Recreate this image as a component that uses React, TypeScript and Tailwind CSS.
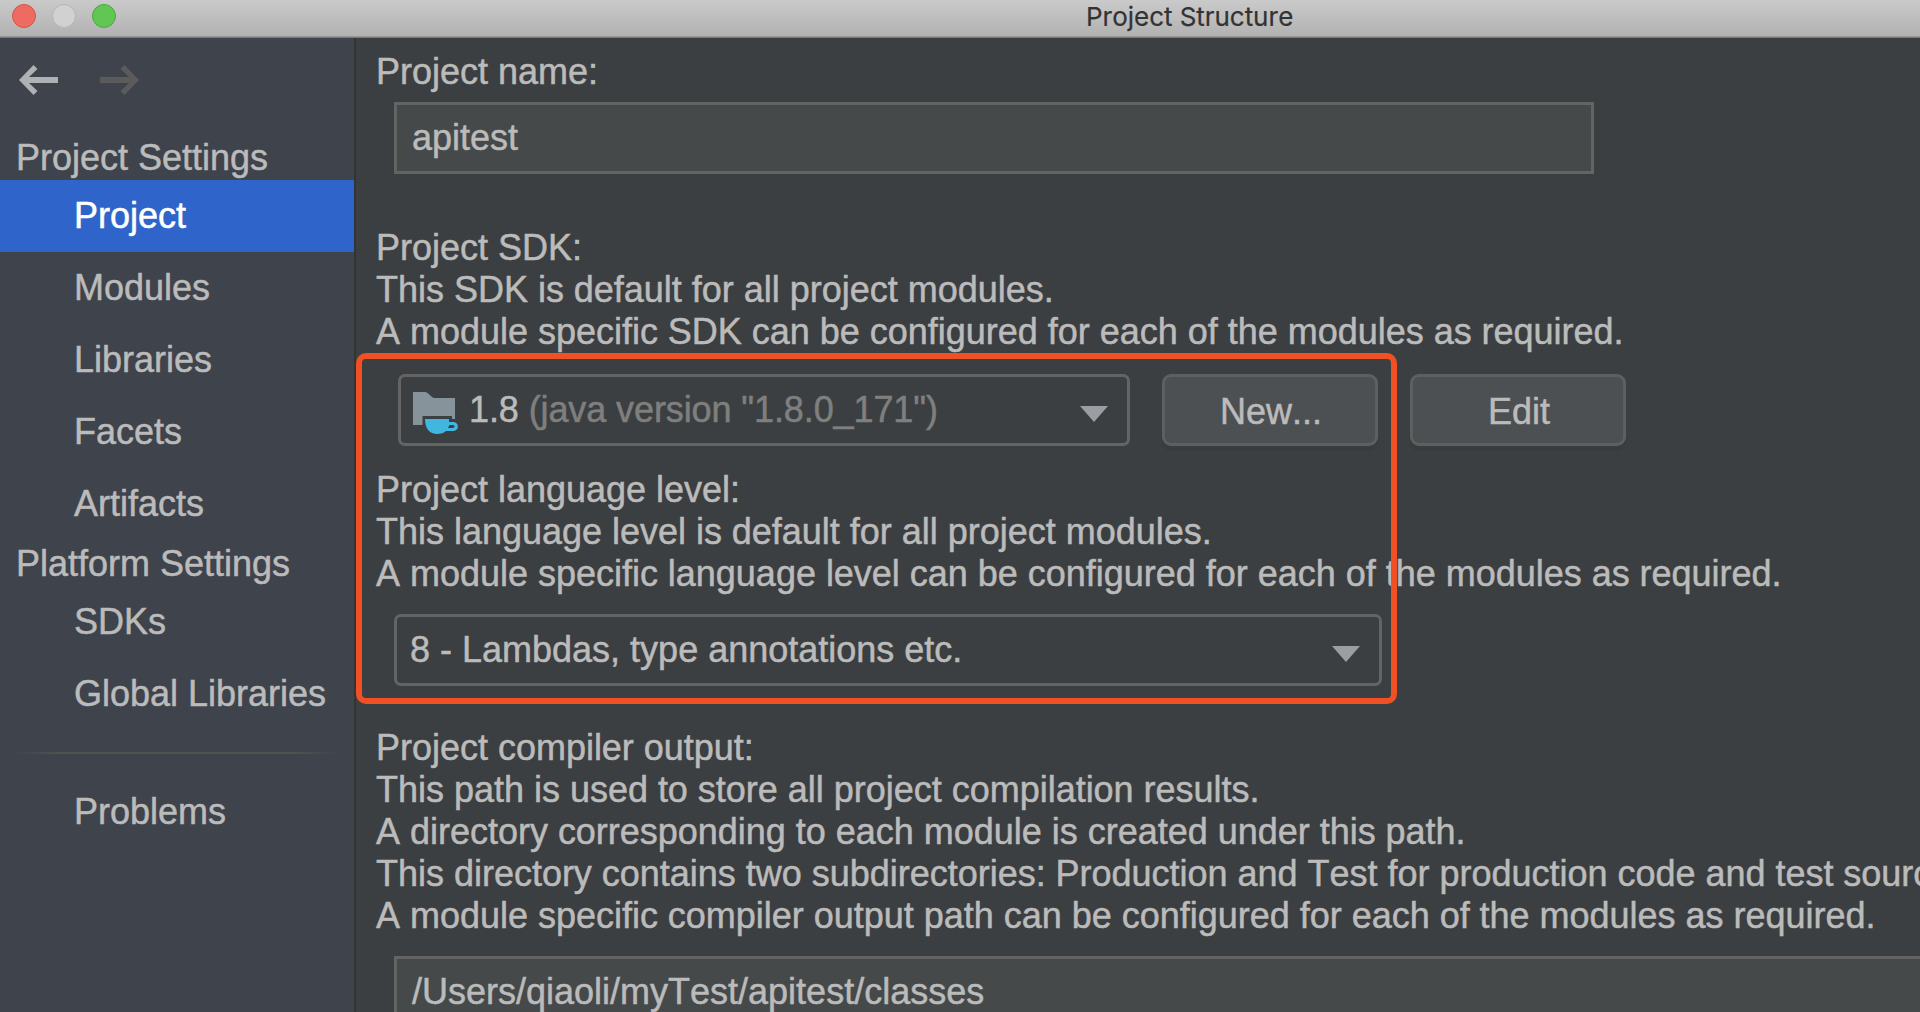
import type { ReactNode } from "react";

const PROJECT_ITEMS = ["Project", "Modules", "Libraries", "Facets", "Artifacts"];
const PLATFORM_ITEMS = ["SDKs", "Global Libraries"];

function TitleBar() {
  return (
    <header className="flex h-[38px] shrink-0 items-start border-b border-[#77797a] bg-linear-to-b from-[#cacaca] to-[#b1b1b1] shadow-[inset_0_-1px_0_#979797]">
      <div className="flex gap-4 pt-1 pl-3">
        <span className="size-6 rounded-full border border-[#d9534a] bg-[#ed6b60]" />
        <span className="size-6 rounded-full border border-[#b5b5b5] bg-[#d1d1d1]" />
        <span className="size-6 rounded-full border border-[#4ba93d] bg-[#62c655]" />
      </div>
      <h1 className="ml-[970px] font-['Inter',sans-serif] text-[26px] leading-[33px] tracking-[-0.05px] whitespace-nowrap text-[#333333] [-webkit-text-stroke:0.2px]">
        Project Structure
      </h1>
    </header>
  );
}

function NavItem({ label, selected = false }: { label: string; selected?: boolean }) {
  return (
    <li
      className={`flex h-[72px] items-center pl-[74px] leading-[42px] ${
        selected ? "bg-[#2f65ca] text-white" : ""
      }`}
    >
      {label}
    </li>
  );
}

function NavHeading({ children }: { children: ReactNode }) {
  return <h2 className="h-[46px] pt-[3px] pl-4 leading-[42px]">{children}</h2>;
}

function Sidebar() {
  return (
    <aside className="flex w-[356px] shrink-0 flex-col border-r-2 border-[#343434] bg-[#3f434c]">
      <div className="flex h-24 gap-[42px] pt-[26px] pl-[19px]">
        <svg className="h-8 w-[39px]" viewBox="0 0 39 32" fill="#afb1b3">
          <path d="M0 16 14.5 1 18.5 5 10 13H39V19H10L18.5 27 14.5 31Z" />
        </svg>
        <svg className="h-8 w-[39px]" viewBox="0 0 39 32" fill="#5b5b5b">
          <path d="M39 16 24.5 1 20.5 5 29 13H0V19H29L20.5 27 24.5 31Z" />
        </svg>
      </div>
      <NavHeading>Project Settings</NavHeading>
      <ul>
        {PROJECT_ITEMS.map((item) => (
          <NavItem key={item} label={item} selected={item === "Project"} />
        ))}
      </ul>
      <NavHeading>Platform Settings</NavHeading>
      <ul>
        {PLATFORM_ITEMS.map((item) => (
          <NavItem key={item} label={item} />
        ))}
      </ul>
      <div className="mx-2.5 my-[22px] h-0.5 shrink-0 bg-[linear-gradient(to_right,transparent,#515151_15%,#515151_85%,transparent)]" />
      <ul>
        <NavItem label="Problems" />
      </ul>
    </aside>
  );
}

function Chevron() {
  return (
    <svg className="mt-2 h-4 w-7" viewBox="0 0 28 16" fill="#9a9da1">
      <path d="M0 0H28L14 16Z" />
    </svg>
  );
}

function SdkIcon() {
  return (
    <svg className="mt-1.5 h-[42px] w-[46px]" viewBox="0 0 46 42">
      <path fill="#87939a" d="M0 0H12C15 0 18 5 21 6H42V27H39V24H9.500V33H0Z" />
      <path
        fill="#40b6e0"
        fillRule="evenodd"
        d="M12 27H36V30H40C46.500 30 46.500 39 40 39H33C31 41 28 42 24 42C17 42 12 37 12 27ZM36.500 33L35 36H40C42 36 42 33 40 33Z"
      />
    </svg>
  );
}

function Button({ children }: { children: ReactNode }) {
  return (
    <button className="h-[72px] w-[216px] rounded-[9px] border-[3px] border-[#5e6060] bg-[#4c5052] pt-1 pl-0.5 leading-[42px] shadow-[0_5px_0_#393b3c]">
      {children}
    </button>
  );
}

function Field({ className, children }: { className: string; children: ReactNode }) {
  return (
    <div
      className={`ml-[18px] flex h-[72px] shrink-0 items-center border-[3px] border-[#646464] bg-[#45494a] pl-[15px] leading-[42px] ${className}`}
    >
      {children}
    </div>
  );
}

function Lines({ lines }: { lines: string[] }) {
  return (
    <div className="leading-[42px] tracking-[-0.015px] whitespace-nowrap">
      {lines.map((line) => (
        <p key={line}>{line}</p>
      ))}
    </div>
  );
}

export default function App() {
  return (
    <div className="flex h-[1012px] w-[1920px] flex-col overflow-hidden bg-[#3c3f41] font-['Liberation_Sans',Arial,sans-serif] text-[36px] text-[#bbbbbb] [-webkit-text-stroke:0.5px] [font-kerning:none]">
      <TitleBar />
      <div className="flex min-h-0 flex-1">
        <Sidebar />
        <main className="relative flex min-w-0 flex-1 flex-col overflow-hidden pt-[13px] pl-5">
          <Lines lines={["Project name:"]} />
          <Field className="mt-[9px] w-[1200px]">apitest</Field>

          <div className="mt-[53px]">
            <Lines
              lines={[
                "Project SDK:",
                "This SDK is default for all project modules.",
                "A module specific SDK can be configured for each of the modules as required.",
              ]}
            />
          </div>
          <div className="mt-[21px] ml-[22px] flex gap-8">
            <div className="flex h-[72px] w-[732px] items-center rounded-[7px] border-[3px] border-[#646464] pr-[19px] pl-3">
              <SdkIcon />
              <span className="ml-2.5 flex-1 leading-[42px] tracking-[-0.1px] whitespace-nowrap">
                1.8 <span className="text-[#7f7f7f]">(java version "1.8.0_171")</span>
              </span>
              <Chevron />
            </div>
            <Button>New...</Button>
            <Button>Edit</Button>
          </div>

          <div className="mt-[23px]">
            <Lines
              lines={[
                "Project language level:",
                "This language level is default for all project modules.",
                "A module specific language level can be configured for each of the modules as required.",
              ]}
            />
          </div>
          <div className="mt-[19px] ml-[18px] flex h-[72px] w-[988px] shrink-0 items-center rounded-[7px] border-[3px] border-[#646464] pr-[19px] pl-[13px]">
            <span className="flex-1 leading-[42px]">8 - Lambdas, type annotations etc.</span>
            <Chevron />
          </div>

          <div className="mt-[41px]">
            <Lines
              lines={[
                "Project compiler output:",
                "This path is used to store all project compilation results.",
                "A directory corresponding to each module is created under this path.",
                "This directory contains two subdirectories: Production and Test for production code and test sources.",
                "A module specific compiler output path can be configured for each of the modules as required.",
              ]}
            />
          </div>
          <Field className="mt-[19px] w-[1600px]">/Users/qiaoli/myTest/apitest/classes</Field>

          <div className="pointer-events-none absolute top-[315px] left-0 h-[351px] w-[1041px] rounded-[10px] border-[6px] border-[#f05023]" />
        </main>
      </div>
    </div>
  );
}
